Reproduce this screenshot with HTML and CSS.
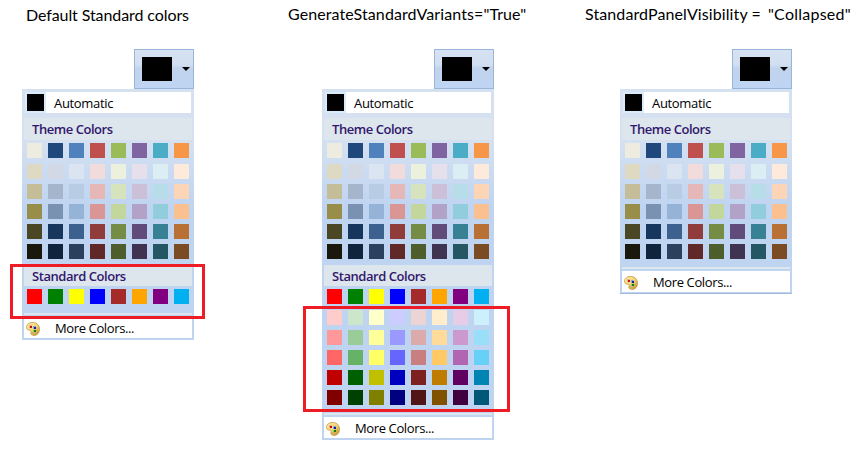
FILE: index.html
```
<!DOCTYPE html>
<html lang="en">
<head>
<meta charset="utf-8">
<title>Color picker panels</title>
<link rel="stylesheet" href="styles.css">
</head>
<body>
<svg class="defs" width="0" height="0" aria-hidden="true">
  <defs>
    <linearGradient id="gold" x1="0" y1="0" x2="1" y2="1">
      <stop offset="0" stop-color="#fdeeb0"/><stop offset=".5" stop-color="#f3d676"/><stop offset="1" stop-color="#b98524"/>
    </linearGradient>
    <symbol id="palette" viewBox="0 0 14 14">
      <path d="M5 .6C8-.1 11 1 12.600 3.600c1.600 3 1 7.200-1.600 9-2 1.400-5.200 1-6-.6-.6-1.400.6-2.600 0-3.400-.7-.9-2.200-.1-3.500-.9C.3 6.700.2 4.700 1 3.200 1.900 1.800 3.300 1 5 .6z" fill="url(#gold)" stroke="#c4963c" stroke-width=".8"/>
      <path d="M5.500 11c.6-.8 1.700-.8 2.200 0-.5.800-1.600.8-2.200 0z" fill="#fff" stroke="#a87a28" stroke-width=".5"/>
      <path d="M4 4h1v-1h1v2H4z" fill="#fff4c4"/>
      <path d="M3 3h3v3H3z" fill="#e9b08a"/><path d="M4 4h2v2H4z" fill="#c80f08"/>
      <path d="M7 4h3v3H7z" fill="#8fa3dc"/><path d="M8 5h2v2H8z" fill="#0b1fae"/>
      <path d="M7 8h3v2H7z" fill="#8fce6c"/><path d="M8 8h2v2H8z" fill="#08800f"/>
    </symbol>
  </defs>
</svg>
<main class="board">
  <section class="picker picker-default">
    <h2 class="title"><span class="t1">Default Standard colors</span></h2>
    <div class="button"><span class="current"></span><svg class="arrow" viewBox="0 0 8 4"><path d="M0 0h8L4 4z"/></svg></div>
    <div class="panel">
      <div class="automatic"><span class="auto-chip"></span><span class="auto-text">Automatic</span></div>
      <h3 class="heading"><span class="h-theme">Theme Colors</span></h3>
      <div class="swatches" data-set="theme"></div>
      <h3 class="heading heading-standard"><span class="h-standard">Standard Colors</span></h3>
      <div class="swatches" data-set="standard"></div>
      <div class="separator"></div>
      <div class="more"><svg class="icon"><use href="#palette"/></svg><span class="more-text">More Colors...</span></div>
    </div>
    <div class="marker marker-standard"></div>
  </section>
  <section class="picker picker-variants">
    <h2 class="title"><span class="t2">GenerateStandardVariants="True"</span></h2>
    <div class="button"><span class="current"></span><svg class="arrow" viewBox="0 0 8 4"><path d="M0 0h8L4 4z"/></svg></div>
    <div class="panel">
      <div class="automatic"><span class="auto-chip"></span><span class="auto-text">Automatic</span></div>
      <h3 class="heading"><span class="h-theme">Theme Colors</span></h3>
      <div class="swatches" data-set="theme"></div>
      <h3 class="heading heading-standard"><span class="h-standard">Standard Colors</span></h3>
      <div class="swatches" data-set="variants"></div>
      <div class="separator"></div>
      <div class="more"><svg class="icon"><use href="#palette"/></svg><span class="more-text">More Colors...</span></div>
    </div>
    <div class="marker marker-variants"></div>
  </section>
  <section class="picker picker-collapsed">
    <h2 class="title"><span class="t3">StandardPanelVisibility =</span><span class="t4">"Collapsed"</span></h2>
    <div class="button"><span class="current"></span><svg class="arrow" viewBox="0 0 8 4"><path d="M0 0h8L4 4z"/></svg></div>
    <div class="panel">
      <div class="automatic"><span class="auto-chip"></span><span class="auto-text">Automatic</span></div>
      <h3 class="heading"><span class="h-theme">Theme Colors</span></h3>
      <div class="swatches" data-set="theme"></div>
      <div class="separator"></div>
      <div class="more"><svg class="icon"><use href="#palette"/></svg><span class="more-text">More Colors...</span></div>
    </div>
  </section>
</main>
<script src="script.js"></script>
</body>
</html>
```
FILE: styles.css
```
* { box-sizing: border-box; }
body { margin: 0; background: #fff; color: #000; overflow: hidden; font-family: "Open Sans", "Noto Sans", sans-serif; }
.defs { display: block; height: 0; }
.board { display: flex; align-items: flex-start; padding-left: 22px; }
.picker { position: relative; width: 172px; flex: none; display: flex; flex-direction: column; }
.picker-variants { margin-left: 128px; }
.picker-collapsed { margin-left: 126px; }
.title { display: flex; margin: 0; height: 49px; padding-top: 3px; font: 400 16px/22px Lato, sans-serif; white-space: pre; }
.picker-default .title { margin-left: 4px; padding-top: 4px; }
.picker-variants .title { margin-left: -34px; }
.picker-collapsed .title { margin-left: -35px; margin-right: -60px; }
.t1 { letter-spacing: -.09px; }
.t2 { letter-spacing: .09px; }
.t3 { letter-spacing: .1px; }
.t4 { margin-left: 7px; letter-spacing: .25px; }
.button { align-self: flex-end; width: 60px; height: 40px; display: flex; align-items: center; padding-left: 7px; border: 1px solid #98b5dc; background: linear-gradient(#d6e2f2 0, #d2dff0 38%, #c1d3ec 48%, #bfd5f4 100%); }
.current { width: 30px; height: 24px; background: #000; }
.arrow { width: 8px; height: 4px; margin-left: 10px; }
.panel { padding: 3px 2px 2px; background: linear-gradient(#d5e1f1 0, #d5e1f1 50px, #bfd4f1 120px, #bfd4f1 100%); }
.automatic { display: flex; align-items: center; height: 21px; margin: 0 1px 5px; background: #fff; font-size: 13px; line-height: 21px; }
.auto-chip { width: 21px; height: 21px; border: 2px solid #d9ebfb; background: #000; }
.auto-text { margin: 2px 0 0 8px; letter-spacing: -.32px; }
.heading { margin: 0 0 3px; height: 22px; padding-left: 8px; background: #dce6ec; color: #32176d; font-size: 13px; font-weight: 600; line-height: 22px; white-space: nowrap; letter-spacing: -.45px; }
.heading-standard { height: 21px; margin-top: 6px; line-height: 23px; }
.swatches { display: grid; grid-template-columns: repeat(8, 15px); column-gap: 6px; row-gap: 5px; padding-left: 3px; }
.swatch { height: 15px; }
.swatch.first-tint { margin-top: 1px; }
.separator { height: 2px; margin: 8px 0 2px; background: #dce6ec; }
.picker-default .separator { margin-top: 9px; }
.more { display: flex; height: 21px; padding: 5px 0 0 2px; background: #fff; font-size: 13px; line-height: 21px; white-space: nowrap; }
.icon { width: 14px; height: 14px; }
.more-text { margin: -4px 0 0 15px; letter-spacing: -.38px; }
.picker-collapsed .panel { padding-bottom: 1px; border-bottom: 1px solid #a3badb; }
.marker { position: absolute; border: 3px solid #ee1c25; }
.marker-standard { left: -12px; top: 264px; width: 195px; height: 55px; }
.marker-variants { left: -19px; top: 306px; width: 207px; height: 106px; }
```
FILE: script.js
```
const theme = [
  "eeece1 1f497d 4f81bd c0504d 9bbb59 8064a2 4bacc6 f79646",
  "ddd9c3 d2d9e5 dbe5f1 f2dbdb ebf1dd e5e0ec dbeef3 fdeada",
  "c4bd97 a5b5cb b8cce4 e5b8b7 d7e3bc ccc0d9 b7dde8 fbd5b5",
  "988e4a 7a92b1 95b3d7 d99694 c3d69b b2a2c7 92cddc fac08f",
  "4b4623 17365d 3d618e 903c3a 748c43 604b7a 388194 b97035",
  "1a180c 10243d 2a405e 602827 4e5d2c 403251 255663 7b4b23"
];
const standard = ["ff0000 008000 ffff00 0000ff a52a2a ffa500 800080 00b0f0"];
const variants = standard.concat([
  "ffcccc cce6cc ffffcc ccccff edd4d4 ffedcc e6cce6 ccf0fc",
  "ff9999 99cc99 ffff99 9999ff dbaaaa ffdb99 cc99cc 99dff9",
  "ff6666 66b266 ffff66 6666ff c97f7f ffc966 b266b2 66d0f6",
  "c00000 006000 c0c000 0000c0 7c2020 c07c00 600060 0084b4",
  "800000 004000 808000 000080 521515 805200 400040 005878"
]);
const sets = { theme, standard, variants };
document.querySelectorAll(".swatches").forEach(grid => {
  sets[grid.dataset.set].forEach((row, i) => row.split(" ").forEach(color => {
    const cell = document.createElement("span");
    cell.className = "swatch" + (i === 1 ? " first-tint" : "");
    cell.style.backgroundColor = "#" + color;
    grid.append(cell);
  }));
});
```
